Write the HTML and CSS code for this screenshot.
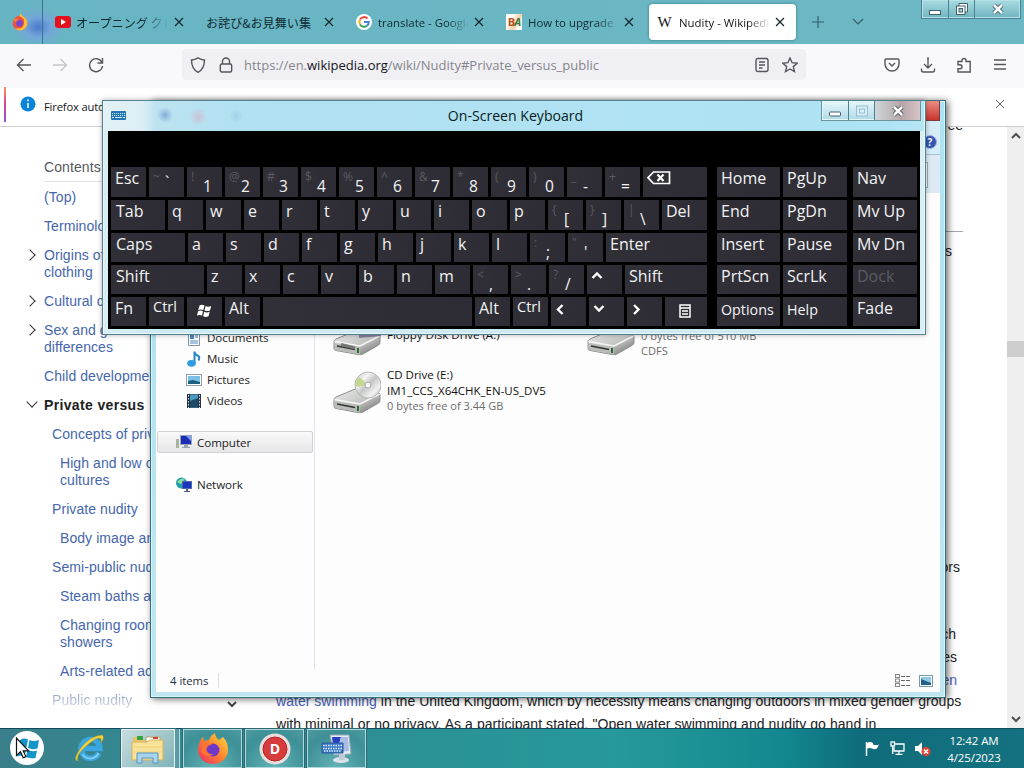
FILE: index.html
```html
<!DOCTYPE html>
<html lang="en">
<head>
<meta charset="utf-8">
<title>Desktop</title>
<link rel="stylesheet" href="styles.css">
</head>
<body>
<div class="desktop">
  <main class="browser">
    <header class="tabstrip">
      <div class="pinned"><svg width="18" height="18" viewBox="0 0 32 32"><circle cx="16" cy="18" r="13" fill="#f0503c"/><path d="M17 0q1 5 6 7 7 5 6 13a13 13 0 0 1-22 7q14 3 16-8T15 6z" fill="#ffbf35"/><circle cx="15" cy="18" r="6" fill="#7848c8"/><path d="M4 12q6-5 10 1-5 0-5 4z" fill="#ff8038"/></svg></div>
      <div class="tabs">
        <div class="tab"><svg class="fav wide" width="16" height="12" viewBox="0 0 16 12"><rect width="16" height="12" rx="3" fill="#e4101c"/><path d="M6 3v6l5-3z" fill="#fff"/></svg><span class="label jp yt">オープニング クレ</span><svg class="x" viewBox="0 0 10 10"><path d="M1 1l8 8M9 1l-8 8"/></svg></div>
        <div class="tab plain"><span class="label jp">お詫び&amp;お見舞い集</span><svg class="x" viewBox="0 0 10 10"><path d="M1 1l8 8M9 1l-8 8"/></svg></div>
        <div class="tab"><svg class="fav" width="16" height="16" viewBox="0 0 16 16"><circle cx="8" cy="8" r="8" fill="#fff"/><g fill="none" stroke-width="2"><path d="M4 5.5a4.8 4.8 0 0 1 7.5-1" stroke="#e04a3c"/><path d="M4 5.5a5 5 0 0 0 0 5" stroke="#f3b820"/><path d="M4 10.5a4.8 4.8 0 0 0 7 1.2" stroke="#35a457"/><path d="M8 8h4.8q0 2.5-1.8 3.7" stroke="#4381e8"/></g></svg><span class="label">translate - Google</span><svg class="x" viewBox="0 0 10 10"><path d="M1 1l8 8M9 1l-8 8"/></svg></div>
        <div class="tab"><span class="fav ba"><b>B</b><i>A</i></span><span class="label">How to upgrade</span><svg class="x" viewBox="0 0 10 10"><path d="M1 1l8 8M9 1l-8 8"/></svg></div>
        <div class="tab active"><span class="fav w">W</span><span class="label">Nudity - Wikipedi</span><svg class="x" viewBox="0 0 10 10"><path d="M1 1l8 8M9 1l-8 8"/></svg></div>
      </div>
      <svg class="newtab" width="14" height="14" viewBox="0 0 14 14"><path d="M7 1v12M1 7h12"/></svg>
      <svg class="alltabs" width="14" height="14" viewBox="0 0 14 14"><path d="M2 4l5 5 5-5"/></svg>
      <div class="controls">
        <span class="ctl min"><svg width="14" height="14" viewBox="0 0 14 14"><rect x="1.5" y="8.5" width="11" height="4" fill="#fff" stroke="#41606c"/></svg></span>
        <span class="ctl max"><svg width="14" height="14" viewBox="0 0 14 14"><path d="M4 1.5h8.5V10H4z" fill="#fff" stroke="#41606c"/><rect x="1.5" y="4" width="8.5" height="8.5" fill="#fff" stroke="#41606c"/><rect x="4" y="6.5" width="3.5" height="3.5" fill="#9cc" stroke="#41606c"/></svg></span>
        <span class="ctl cls"><svg width="14" height="14" viewBox="0 0 14 14"><path d="M3 3l8 8M11 3l-8 8" stroke="#41606c" stroke-width="4.5"/><path d="M3 3l8 8M11 3l-8 8" stroke="#fff" stroke-width="2.5"/></svg></span>
      </div>
    </header>
    <nav class="toolbar">
      <svg width="16" height="16" viewBox="0 0 16 16"><path d="M15 8H1.5M7.5 2l-6 6 6 6"/></svg>
      <svg class="dim" width="16" height="16" viewBox="0 0 16 16"><path d="M1 8h13.5M8.5 2l6 6-6 6"/></svg>
      <svg width="16" height="16" viewBox="0 0 16 16"><path d="M14 5.5A6.5 6.5 0 1 0 14.5 9M14.5 1v5h-5"/></svg>
      <div class="urlbar">
        <svg width="16" height="16" viewBox="0 0 16 16"><path d="M8 .8q3 1.900 6.500 2.200 0 9-6.500 12.300Q1.500 12 1.500 3 5 2.700 8 .8z"/></svg>
        <svg class="lock" width="14" height="16" viewBox="0 0 14 16"><rect x="1.300" y="7" width="11.400" height="8" rx="1.500"/><path d="M3.500 7V4.500a3.500 3.500 0 0 1 7 0V7"/></svg>
        <span class="url">https://en.<b>wikipedia.org</b>/wiki/Nudity#Private_versus_public</span>
        <svg width="14" height="16" viewBox="0 0 14 16"><rect x="1" y="1.500" width="12" height="13" rx="2"/><path d="M4 5h6M4 8h6M4 11h3.500"/></svg>
        <svg class="star" width="16" height="16" viewBox="0 0 16 16"><path d="M8 1l2.100 4.700 5.100.5-3.900 3.400 1.200 5L8 12l-4.500 2.600 1.200-5L.8 6.200l5.100-.5z"/></svg>
      </div>
      <svg class="pocket" width="16" height="16" viewBox="0 0 16 16"><path d="M2 2h12q1 0 1 1v4a7 7 0 0 1-14 0V3q0-1 1-1zM5 6l3 3 3-3"/></svg>
      <svg width="16" height="16" viewBox="0 0 16 16"><path d="M8 0v10.500M4 7l4 4 4-4M1.500 11.500v1.500q0 2 2 2h9q2 0 2-2v-1.500"/></svg>
      <svg width="16" height="16" viewBox="0 0 16 16"><path d="M2 6V4.500h4v-1a2 2 0 0 1 4 0v1h4.200V15H2v-3.300h2a2 2 0 0 0 0-4H2z"/></svg>
      <svg width="16" height="16" viewBox="0 0 16 16"><path d="M2 3h12M2 7.500h12M2 12h12"/></svg>
    </nav>
    <div class="notice">
      <i class="stripe"></i>
      <svg width="16" height="16" viewBox="0 0 16 16"><circle cx="8" cy="8" r="7.500" fill="#0a84d8"/><path d="M8 3.500v1.800M8 7v5" stroke="#fff" stroke-width="1.500"/></svg>
      <span>Firefox auto</span>
      <svg class="x" viewBox="0 0 10 10"><path d="M1 1l8 8M9 1l-8 8"/></svg>
    </div>
    <div class="page">
      <aside class="toc">
        <h2>Contents</h2>
        <ul>
          <li>(Top)</li><li>Terminolo</li>
          <li class="more">Origins of<br>clothing</li><li class="more">Cultural c</li>
          <li class="more">Sex and g<br>differences</li><li>Child developme</li>
          <li class="more open">Private versus</li>
          <li class="l2">Concepts of priv</li><li class="l3">High and low c<br>cultures</li>
          <li class="l2">Private nudity</li><li class="l3">Body image an</li>
          <li class="l2">Semi-public nud</li><li class="l3">Steam baths a</li>
          <li class="l3">Changing room<br>showers</li><li class="l3">Arts-related ac</li>
          <li class="l2 fade">Public nudity</li>
        </ul>
      </aside>
      <svg class="tocdown" width="10" height="8" viewBox="0 0 10 8"><path d="M1 2l4 4 4-4"/></svg>
      <article>
        <p class="r p1">ee</p><hr>
        <p class="r p2">s</p>
        <p class="r p3">ors</p>
        <p class="r p4">ch</p>
        <p class="r p5">es</p>
        <p class="r p5"><a>en</a></p>
        <p class="line first"><a>water swimming</a> in the United Kingdom, which by necessity means changing outdoors in mixed gender groups</p>
        <p class="line second">with minimal or no privacy. As a participant stated, "Open water swimming and nudity go hand in</p>
      </article>
      <div class="scroll">
        <svg width="10" height="8" viewBox="0 0 10 8"><path d="M1 6l4-4 4 4"/></svg>
        <i></i>
        <svg class="dn" width="10" height="8" viewBox="0 0 10 8"><path d="M1 2l4 4 4-4"/></svg>
      </div>
    </div>
  </main>

  <section class="explorer">
    <div class="exbody">
      <div class="ribbon"><i class="redclose"></i><span class="help">?</span><i class="search"></i></div>
      <div class="columns">
        <div class="side">
          <div class="it sub"><svg width="16" height="16" viewBox="0 0 16 16"><path d="M2.500.5h11v15h-11z" fill="#fff" stroke="#8096a8"/><rect x="4" y="4" width="4" height="5" fill="#4d86c0"/><path d="M9 5h3M9 7h3M4 11h8M4 13h8" stroke="#4d86c0"/></svg>Documents</div>
          <div class="it sub"><svg width="16" height="16" viewBox="0 0 16 16"><path d="M8.500 13V.5q0 3 3 4t1 5" fill="none" stroke="#2788c8" stroke-width="2"/><ellipse cx="5.500" cy="12.300" rx="4.300" ry="3.400" fill="#2f9be0"/></svg>Music</div>
          <div class="it sub"><svg width="16" height="16" viewBox="0 0 16 16"><rect x=".5" y="2.500" width="15" height="11" fill="#fff" stroke="#8fa3b5"/><rect x="2" y="4" width="12" height="8" fill="#7cc0e8"/><path d="M2 9l5-1 7 2v2H2z" fill="#1c6080"/></svg>Pictures</div>
          <div class="it sub"><svg width="16" height="16" viewBox="0 0 16 16"><rect x="1" y="1" width="14" height="14" fill="#26343f"/><rect x="4" y="1.500" width="8" height="13" fill="#4c9ac8"/><path d="M4 8l8-3v9H4z" fill="#1f4a68"/><path d="M2.500 2v13M13.500 2v13" stroke="#dfe8ee" stroke-dasharray="1.500 1.500"/></svg>Videos</div>
          <div class="it sel"><svg width="16" height="16" viewBox="0 0 16 16"><rect x="0" y="5" width="3" height="9" fill="#a8b4a0"/><rect x="4.500" y="1.500" width="11" height="9" fill="#1b2fb4" stroke="#98a4bc"/><path d="M10 2h5v5z" fill="#7d9cf0"/><path d="M8 11h4v2h2v1H6v-1h2z" fill="#9aa5b0"/></svg>Computer</div>
          <div class="it net"><svg width="16" height="16" viewBox="0 0 16 16"><circle cx="5.500" cy="6" r="5.500" fill="#22a0b0"/><path d="M1 5q4-5 8-3l-4 5z" fill="#8fdf9c"/><rect x="6.500" y="4.500" width="9" height="7" fill="#1737c0" stroke="#5268a8"/><path d="M10 12h2v2h2v1H8v-1h2z" fill="#506080"/></svg>Network</div>
        </div>
        <div class="files">
          <div class="drive">
            <svg width="48" height="46" viewBox="0 0 48 46"><use href="#box"/><path d="M26 15h22v8l-22 2z" fill="#8580a0"/><path d="M8 31.500l14 3.500" stroke="#777" stroke-width="3"/></svg>
            <div class="txt"><span>Floppy Disk Drive (A:)</span></div>
          </div>
          <div class="drive">
            <svg width="48" height="46" viewBox="0 0 48 46"><use href="#box"/><ellipse cx="35" cy="15" rx="13" ry="9" fill="#cfd2d0"/></svg>
            <div class="txt up"><span>CD Drive</span><em>0 bytes free of 510 MB</em><em>CDFS</em></div>
          </div>
          <div class="drive two">
            <svg width="48" height="46" viewBox="0 0 48 46">
              <defs>
                <linearGradient id="metal" x1="0" y1="0" x2="1" y2="1"><stop offset="0" stop-color="#ececec"/><stop offset=".55" stop-color="#c4c6c4"/><stop offset="1" stop-color="#666"/></linearGradient>
                <linearGradient id="disc" x1="0" y1="0" x2="1" y2="1"><stop offset="0" stop-color="#c0c4c0"/><stop offset=".3" stop-color="#f4f4f4"/><stop offset=".5" stop-color="#c4c6c4"/><stop offset=".75" stop-color="#f2f2f2"/><stop offset="1" stop-color="#aeb0ae"/></linearGradient>
                <g id="box"><path d="M1 28.500Q1 27 3 26L21 18.500q2-.7 4-.4l20 3.500q2 .4 2 2v6q0 1.500-1.500 2.500L30 41q-2 1-4.500.6L3 37.500q-2-.5-2-2z" fill="url(#metal)" stroke="#8c8e8c"/><path d="M1.500 28.500l25.500 4.500 19.500-10" fill="none" stroke="#f6f6f6" stroke-width="1.500"/><path d="M2 30l25 4.500v7L3 37.300q-1-.3-1-2z" fill="#babcba"/><path d="M4 33l18 3.500" stroke="#333" stroke-width="1.300"/><path d="M25 35v5" stroke="#2a6a30" stroke-width="2"/></g>
              </defs>
              <use href="#box"/><circle cx="35" cy="14" r="13" fill="url(#disc)" stroke="#b4b6b4"/><path d="M35 14L22.500 16q-1-6 4-10z" fill="#c4d690"/><circle cx="35" cy="14" r="3" fill="#fff" stroke="#aaa"/></svg>
            <div class="txt"><span>CD Drive (E:)</span><span class="vol">IM1_CCS_X64CHK_EN-US_DV5</span><em>0 bytes free of 3.44 GB</em></div>
          </div>
        </div>
      </div>
      <footer class="status"><span>4 items</span><i></i>
        <svg class="v1" width="16" height="14" viewBox="0 0 16 14"><g fill="none" stroke="#888"><rect x=".5" y=".5" width="4" height="3"/><rect x=".5" y="5" width="4" height="3"/><rect x=".5" y="9.500" width="4" height="3"/><path d="M6 2.500h10M6 6.500h10M6 11.500h10" stroke="#666" stroke-dasharray="4 1"/></g></svg>
        <svg width="14" height="12" viewBox="0 0 14 12"><rect x=".5" y=".5" width="13" height="11" fill="#fff" stroke="#7d97ae"/><rect x="2" y="2" width="10" height="8" fill="#8fcbe6"/><path d="M2 4l10 4v2H2z" fill="#205f88"/></svg>
      </footer>
    </div>
  </section>

  <section class="osk">
    <div class="osktitle">
      <svg class="kbicon" width="15" height="9" viewBox="0 0 15 9"><rect width="15" height="9" rx="1" fill="#2477b4"/><path d="M1 2.500h13M1 4.500h13" stroke="#c9e8fa" stroke-dasharray="1 1"/><path d="M1 6.500h2M4 6.500h7M12 6.500h2" stroke="#c9e8fa"/></svg>
      <span>On-Screen Keyboard</span>
      <div class="controls osc">
        <span class="ctl min"><svg width="14" height="14" viewBox="0 0 14 14"><rect x="1.500" y="8" width="11" height="4" rx="1" fill="#fff" stroke="#41606c"/></svg></span>
        <span class="ctl max"><svg width="14" height="14" viewBox="0 0 14 14" fill="#d8eef6" stroke="#94bfce"><rect x="1.500" y="2" width="11" height="10"/><rect x="4.500" y="5" width="5" height="4"/></svg></span>
        <span class="ctl cls"><svg width="14" height="14" viewBox="0 0 14 14"><path d="M3 3l8 8M11 3l-8 8" stroke="#4c525a" stroke-width="4.500"/><path d="M3 3l8 8M11 3l-8 8" stroke="#fff" stroke-width="2.500"/></svg></span>
      </div>
    </div>
    <div class="keys">
      <div class="row">
        <kbd>Esc</kbd><kbd class="d"><s>~</s><b class="mid">&#96;</b></kbd><kbd class="d"><s>!</s><b>1</b></kbd><kbd class="d"><s>@</s><b>2</b></kbd><kbd class="d"><s>#</s><b>3</b></kbd><kbd class="d"><s>$</s><b>4</b></kbd><kbd class="d"><s>%</s><b>5</b></kbd><kbd class="d"><s>^</s><b>6</b></kbd><kbd class="d"><s>&amp;</s><b>7</b></kbd><kbd class="d"><s>*</s><b>8</b></kbd><kbd class="d"><s>(</s><b>9</b></kbd><kbd class="d"><s>)</s><b>0</b></kbd><kbd class="d"><s>_</s><b>-</b></kbd><kbd class="d"><s>+</s><b>=</b></kbd><kbd class="fill"><svg class="bksp" width="24" height="14" viewBox="0 0 24 14"><path d="M6.500 1H22.500V12.500H6.500L1 6.700z"/><path d="M10.500 3.500l6 6.500M16.500 3.500l-6 6.500" stroke-width="2.200"/></svg></kbd>
        <kbd class="n1">Home</kbd><kbd class="n2">PgUp</kbd><kbd class="n3">Nav</kbd>
      </div>
      <div class="row">
        <kbd class="tabk">Tab</kbd><kbd>q</kbd><kbd>w</kbd><kbd>e</kbd><kbd>r</kbd><kbd>t</kbd><kbd>y</kbd><kbd>u</kbd><kbd>i</kbd><kbd>o</kbd><kbd>p</kbd><kbd class="d"><s>{</s><b>[</b></kbd><kbd class="d"><s>}</s><b>]</b></kbd><kbd class="d"><s>|</s><b>\</b></kbd><kbd class="fill">Del</kbd>
        <kbd class="n1">End</kbd><kbd class="n2">PgDn</kbd><kbd class="n3">Mv Up</kbd>
      </div>
      <div class="row s">
        <kbd class="capsk">Caps</kbd><kbd>a</kbd><kbd>s</kbd><kbd>d</kbd><kbd>f</kbd><kbd>g</kbd><kbd>h</kbd><kbd>j</kbd><kbd>k</kbd><kbd>l</kbd><kbd class="d"><s>:</s><b>;</b></kbd><kbd class="d"><s>"</s><b>'</b></kbd><kbd class="fill">Enter</kbd>
        <kbd class="n1">Insert</kbd><kbd class="n2">Pause</kbd><kbd class="n3">Mv Dn</kbd>
      </div>
      <div class="row s">
        <kbd class="shiftk">Shift</kbd><kbd>z</kbd><kbd>x</kbd><kbd>c</kbd><kbd>v</kbd><kbd>b</kbd><kbd>n</kbd><kbd>m</kbd><kbd class="d"><s>&lt;</s><b>,</b></kbd><kbd class="d"><s>&gt;</s><b>.</b></kbd><kbd class="d"><s>?</s><b>/</b></kbd><kbd><svg class="arr" width="12" height="16" viewBox="0 0 12 16"><path d="M1.500 11L6 6.500l4.500 4.500"/></svg></kbd><kbd class="fill">Shift</kbd>
        <kbd class="n1">PrtScn</kbd><kbd class="n2">ScrLk</kbd><kbd class="n3 off">Dock</kbd>
      </div>
      <div class="row s">
        <kbd>Fn</kbd><kbd class="ctrl">Ctrl</kbd><kbd class="win"><svg width="15" height="14" viewBox="0 0 15 14" fill="#fff"><path d="M2.500 1.500q2.500-1.500 5 0L6.400 6Q4 5 1.200 6zM8.600 2q2.500 1.300 5.600 0L13 6.500q-2.500 1-5.500 0zM1 7.200q2.500-1.200 5 0L5 11.600q-2.300-1.200-5 0zM7.200 7.800q2.500 1.200 5.500 0l-1.200 4.500q-2.800 1.200-5.400 0z"/></svg></kbd><kbd>Alt</kbd><kbd class="space"></kbd><kbd>Alt</kbd><kbd class="ctrl">Ctrl</kbd><kbd><svg class="arr low" width="12" height="16" viewBox="0 0 12 16"><path d="M7.500 4L3 8.500 7.500 13"/></svg></kbd><kbd><svg class="arr" width="12" height="16" viewBox="0 0 12 16"><path d="M1.500 7L6 11.500 10.500 7"/></svg></kbd><kbd><svg class="arr low" width="12" height="16" viewBox="0 0 12 16"><path d="M3 4l4.500 4.500L3 13"/></svg></kbd><kbd class="fill menu"><svg width="12" height="14" viewBox="0 0 12 14" fill="none" stroke="#fff"><rect x="1" y="1" width="10" height="12" stroke-width="1.500"/><path d="M1 4h10M3 7h6M3 10h6" stroke-width="1.500"/></svg></kbd>
        <kbd class="n1 small">Options</kbd><kbd class="n2 small">Help</kbd><kbd class="n3">Fade</kbd>
      </div>
    </div>
  </section>

  <footer class="taskbar">
    <div class="start"><svg width="34" height="34" viewBox="0 0 34 34"><circle cx="17" cy="17" r="17" fill="#fff"/><path d="M10 9q4-2.500 8-.5l-1.500 8q-4-1-8 .5zM19.500 9q4 2 9.500 0l-1.500 8.500q-5 1.500-9.500-.5zM8.500 18.500q4-1.500 7.500 0l-1.500 7q-4-1.500-7.500 0zM17.500 19q4.500 2 9.500.5L25.500 27q-5 1-9.500-1z" fill="#1495c8"/><path d="M6.500 7v17.500l4-3.700 2.700 6 2.700-1.200-2.700-5.700h5.300z" fill="#fff" stroke="#111" stroke-width="1.200"/></svg></div>
    <div class="ie"><svg width="32" height="32" viewBox="0 0 32 32"><path d="M26 21a9.500 9.500 0 1 1 1-4.500H10" fill="none" stroke="#3aa6e2" stroke-width="5.500"/><path d="M25.500 21a9 9 0 0 1-16 1" fill="none" stroke="#7bcdf5" stroke-width="2"/><path d="M5 29Q-1 28 8 16T29 3q3 2-1 8 1-5-2-5-4 0-14 9T5 29z" fill="#f2d23c" stroke="#caa520" stroke-width=".5"/></svg></div>
    <div class="task folder"><svg width="34" height="32" viewBox="0 0 34 32"><path d="M2 4h9l2 3h17v20H2z" fill="#e8c46a"/><path d="M6 3h6v4H6z" fill="#37a348"/><path d="M15 4h14v5H15z" fill="#fff" stroke="#b7a468"/><path d="M22 5h5" stroke="#c44" stroke-width="2"/><path d="M1 9h15l3-2h13v20H1z" fill="#f8e39a" stroke="#d2b35c"/><path d="M2 14h30M2 19h30" stroke="#efd078"/><path d="M6 30V20h21v10h-5v-5H11v5z" fill="#a8d4ee" stroke="#5294c0"/></svg></div>
    <i class="stack"></i>
    <div class="task fx"><svg width="32" height="32" viewBox="0 0 32 32"><defs><linearGradient id="fire" x1="1" y1="0" x2="0" y2="1"><stop offset="0" stop-color="#ffe24a"/><stop offset=".45" stop-color="#ff8b2a"/><stop offset="1" stop-color="#e8286c"/></linearGradient></defs><path d="M2 11Q4 5 6 4l1 4 5-1q2-5 6-7 0 4 4 7l4-3q5 5 5 13a15 14 0 0 1-30 0q0-3 1-6z" fill="url(#fire)"/><circle cx="16" cy="17" r="6.500" fill="#7038c8"/><path d="M6 11q5-3 9 1-6 0-6 4 1 6 8 5-9 5-13-3z" fill="#fb742e"/></svg></div>
    <div class="task"><svg width="32" height="32" viewBox="0 0 32 32"><circle cx="16" cy="16" r="15.500" fill="#e9dede"/><circle cx="16" cy="16" r="12" fill="#d63c3c" stroke="#b82424"/><text x="16" y="21" text-anchor="middle" class="dlogo">D</text></svg></div>
    <div class="task"><svg width="32" height="32" viewBox="0 0 32 32"><path d="M9 2l19 0 2 19-17 1z" fill="#e4ebf2" stroke="#9aa9b8"/><path d="M11 4l9 0-4 14-3 1z" fill="#263fc0"/><path d="M20 4h7l1 14-12 1z" fill="#a9bce4"/><ellipse cx="20" cy="27" rx="8" ry="3" fill="#dde3ea"/><path d="M18 21h6v6h-6z" fill="#c3ccd5"/><path d="M1 10h21v10H1z" fill="#3777c8" stroke="#2b5b9c"/><path d="M2 12.500h19M2 15.500h19M3 18h17" stroke="#e2f0ff" stroke-width="1.500" stroke-dasharray="1.500 1"/></svg></div>
    <div class="tray">
      <svg width="15" height="15" viewBox="0 0 15 15"><path d="M1.500 1v14" stroke="#fff" stroke-width="1.500"/><path d="M2 2q3-2 6 0v1.500q3 1 6 0l-2 4q-3 1.500-5 0-2-1-5 0z" fill="#fff"/></svg>
      <svg width="15" height="15" viewBox="0 0 15 15" fill="none" stroke="#fff" stroke-width="1.300"><path d="M5 3h9v7H4V6M9 10v3M5.500 13.300h7"/><rect x="1" y="1" width="3.500" height="4"/><path d="M2.700 5v8"/></svg>
      <svg width="16" height="15" viewBox="0 0 16 15"><path d="M0 5h3l4-4v13l-4-4H0z" fill="#fff"/><circle cx="11" cy="10.500" r="4.500" fill="#e04434"/><path d="M9 8.500l4 4M13 8.500l-4 4" stroke="#fff" stroke-width="1.500"/></svg>
    </div>
    <div class="clock"><span>12:42 AM</span><span>4/25/2023</span></div>
  </footer>
</div>
</body>
</html>
```

FILE: styles.css
```css
* { box-sizing: border-box; }
body { margin: 0; font-family: "Open Sans", "Noto Sans", sans-serif; }
svg { display: block; flex: none; }
.desktop { width: 1024px; height: 768px; overflow: hidden; position: relative; display: flex; flex-direction: column; background: #fff; }
.browser { height: 728px; display: flex; flex-direction: column; }

/* tab strip */
.tabstrip { height: 44px; flex: none; display: flex; align-items: center; background: radial-gradient(ellipse 26px 20px at 38px 27px, #4b79cc, #74a6d8 50%, transparent), linear-gradient(90deg, #67b4c3, #6db8c4); }
.pinned { width: 43px; height: 44px; padding: 13px 0 0 11px; border-right: 1px solid #347887; }
.tabs { display: flex; gap: 3px; margin-left: 6px; width: 747px; }
.tab { width: 147px; height: 36px; display: flex; align-items: center; padding: 0 12px 0 7px; color: #0e2a33; font-size: 11.4px; }
.tab.active { background: #fff; border-radius: 4px; color: #15141a; box-shadow: 0 0 3px #357885; padding-right: 11px; }
.fav { margin-right: 6px; width: 16px; flex: none; }
.tab .wide { margin-left: -1px; margin-right: 5px; }
.label { flex: 1; white-space: nowrap; overflow: hidden; margin-right: 4px; mask-image: linear-gradient(90deg, #000 75%, transparent 99%); }
.jp { font-family: "Noto Sans CJK JP", sans-serif; font-size: 12.1px; mask-image: none; margin-right: 0; }
.yt { mask-image: linear-gradient(90deg, #000 70%, transparent 99%); margin-right: 5px; }
.x { width: 10px; height: 10px; fill: none; stroke: #15252c; stroke-width: 1.2; }
.w { font: 15px "Liberation Serif", serif; letter-spacing: -1px; text-align: center; margin-right: 7px; }
.ba { height: 16px; background: linear-gradient(120deg, #fff 30%, #f6cfa0 60%, #fff 80%); font-size: 11px; line-height: 16px; letter-spacing: -1px; text-align: center; }
.ba b { color: #c04a20; }
.ba i { color: #3c7a3c; font-weight: 700; }
.newtab, .alltabs { fill: none; stroke: #355f6b; stroke-width: 1.2; margin-left: 15px; }
.alltabs { margin-left: 26px; }
.controls { display: flex; height: 19px; border: 1px solid #4b8292; border-top: 0; background: linear-gradient(#a9dbe1, #6fb5c1); box-shadow: inset 0 0 0 1px #b4e2e7; }
.tabstrip .controls { margin-left: auto; margin-right: 3px; align-self: flex-start; }
.ctl { width: 27px; display: flex; justify-content: center; align-items: center; border-right: 1px solid #4b8292; }
.ctl.max { width: 26px; }
.ctl.cls { width: 45px; border: 0; }

/* toolbar */
.toolbar { height: 44px; flex: none; background: #f9f9fb; display: flex; align-items: center; padding: 0 16px 3px; gap: 20px; }
.toolbar svg { fill: none; stroke: #55555c; stroke-width: 1.4; }
.toolbar .dim { stroke: #c5c5ca; }
.urlbar { width: 624px; height: 31px; border-radius: 4px; background: #f0f0f4; display: flex; align-items: center; padding: 0 8px; margin-left: 58px; }
.urlbar .lock { margin-left: 13px; }
.url { flex: 1; font-size: 13px; color: #85858c; margin-left: 11px; white-space: nowrap; }
.url b { font-weight: 400; color: #15141a; }
.star { margin-left: 13px; }
.pocket { margin-left: 58px; }
.notice { height: 39px; flex: none; display: flex; align-items: center; background: #fff; border-bottom: 1px solid #cfcfd3; font-size: 11.2px; padding: 0 19px 6px 4px; color: #15141a; }
.notice svg { margin-left: 14px; }
.notice span { margin-left: 8px; padding-top: 4px; flex: 1; letter-spacing: -.15px; }
.notice .x { stroke: #5b5b66; stroke-width: 1; }
.stripe { width: 2px; height: 35px; background: linear-gradient(#ff9460, #d83f92, #9059e0); }

/* article */
.page { flex: 1; min-height: 0; display: flex; overflow: hidden; font: 14px/17px "Liberation Sans", Arial, sans-serif; color: #202122; }
.toc { width: 227px; padding: 32px 0 0 44px; white-space: nowrap; flex: none; }
.toc h2 { font-size: 14px; font-weight: 400; margin: 0; padding-bottom: 5px; color: #54595d; border-bottom: 1px solid #e0e2e6; letter-spacing: .1px; }
.toc ul { list-style: none; margin: 7px 0 0; padding: 0; display: flex; flex-direction: column; gap: 12px; color: #4566ac; letter-spacing: .07px; }
.more::before { content: ""; float: left; width: 7px; height: 7px; margin: 4px 0 0 -18px; border: solid #333; border-width: 1.5px 1.5px 0 0; transform: rotate(45deg); }
.open { color: #202122; font-weight: 700; letter-spacing: .35px; }
.open::before { transform: rotate(135deg); margin-top: 1px; margin-left: -16px; }
.l2 { padding-left: 8px; }
.l3 { padding-left: 16px; }
.fade { color: transparent; background: linear-gradient(#8c9cc4, #dde2ee); background-clip: text; }
.tocdown { fill: none; stroke: #444; stroke-width: 2; align-self: flex-end; margin: 0 0 20px; }
article { margin-left: 39px; width: 688px; flex: none; }
article p { margin: 0; white-space: nowrap; }
article a { color: #4560b8; }
article .line { letter-spacing: .035px; }
.r { text-align: right; padding-right: 4px; }
article .p1 { margin-top: -10px; padding-right: 1px; }
article hr { border: 0; border-top: 1px solid #a2a9b1; margin: 97px 1px 0 0; }
article .p2 { padding-right: 12px; margin-top: 11px; }
article .p3 { margin-top: 299px; }
article .p4 { margin-top: 50px; padding-right: 8px; }
article .p5 { margin-top: 6px; padding-right: 7px; }
article .first { margin-top: 4px; }
article .second { margin-top: 6px; letter-spacing: .06px; }
.scroll { width: 17px; background: #efefef; margin-left: auto; display: flex; flex-direction: column; align-items: center; padding: 5px 0; }
.scroll svg { fill: none; stroke: #505050; stroke-width: 2; flex: none; }
.scroll i { width: 17px; height: 16px; background: #cdcdcd; margin-top: 201px; }
.scroll .dn { margin-top: auto; }

/* file explorer */
.explorer { position: absolute; left: 150px; top: 100px; width: 796px; height: 598px; border: 1px solid #3d6e7e; background: linear-gradient(#aee2f2, #bfe6ee); box-shadow: 2px 1px 7px rgba(0,0,0,.6), inset 0 0 0 1px #d6f5fa; padding: 0 5px 5px; }
.exbody { height: 100%; display: flex; flex-direction: column; background: #fdfdfd; }
.ribbon { height: 92px; flex: none; display: flex; flex-direction: column; align-items: flex-end; background: linear-gradient(#b3e4f4 20px, #d5edf6 20px 53px, #a9c0d2 53px 54px, #dde9f4 54px); }
.redclose { width: 44px; height: 20px; background: linear-gradient(#ec8d84, #c9352c); border: 1px solid #7c3c40; border-top: 0; }
.help { width: 14px; height: 14px; margin: 14px 3px 0; border-radius: 50%; background: #3454b4; border: 1px solid #9eb4e8; color: #fff; font-size: 10px; line-height: 12px; text-align: center; font-weight: 700; }
.search { width: 160px; height: 26px; border: 1px solid #9ba9b4; background: #fff; margin: 13px 12px 0; }
.columns { flex: 1; display: flex; min-height: 0; }
.side { width: 159px; border-right: 1px solid #dce6f0; padding: 134px 0 0 1px; font-size: 11.6px; color: #1c1c1c; }
.it { height: 21px; display: flex; align-items: center; gap: 5px; padding-left: 19px; letter-spacing: -.06px; }
.it.sub { padding-left: 29px; }
.it.sel { margin: 20px 1px 21px 0; height: 22px; padding-left: 18px; border: 1px solid #d2d2d4; border-radius: 2px; background: linear-gradient(#fafafa, #e6e6e8); }
.files { padding: 115px 0 0 18px; display: grid; grid-template-columns: 254px 254px; grid-auto-rows: 58px; align-content: start; }
.drive { display: flex; gap: 6px; color: #111; font-size: 11.5px; }
.drive svg { margin-top: 5px; }
.txt { display: flex; flex-direction: column; line-height: 15.5px; white-space: nowrap; padding-top: 19px; }
.txt.up { padding-top: 4px; }
.two .txt { padding-top: 1px; }
.txt em { font-style: normal; color: #6d6d6d; font-size: 11.05px; }
.status { height: 23px; display: flex; align-items: center; padding: 0 7px 0 14px; font-size: 11.3px; color: #1e2e44; }
.status i { width: 1px; height: 15px; background: #dadfe4; margin-left: 10px; }
.status .v1 { margin-left: auto; margin-right: 8px; }

/* on-screen keyboard */
.osk { position: absolute; left: 102px; top: 100px; width: 824px; height: 235px; border: 1px solid #55808e; background: linear-gradient(90deg, #d9eef4, #cdebf4 5%, #cfeaf2 95%, #d8eff5); box-shadow: 0 0 5px rgba(0,0,0,.3), inset 0 0 0 1px #e4f7fb; padding: 0 5px 5px; display: flex; flex-direction: column; }
.osktitle { height: 30px; flex: none; margin: 0 -4px; padding-left: 4px; display: grid; grid-template-columns: 1fr auto 1fr; align-items: start; background: radial-gradient(circle 8px at 61px 14px, rgba(86,134,200,.55), transparent), radial-gradient(circle 9px at 94px 16px, rgba(224,160,190,.5), transparent), radial-gradient(circle 7px at 132px 15px, rgba(120,170,200,.3), transparent), linear-gradient(90deg, #e2f1f5 0, #dceef4 38px, #bde3f1 52px, #b2e1f1 120px, #aee3f4 95%, #b8e5f2); font-size: 14.1px; line-height: 30px; color: #0b1c22; }
.osktitle > span { margin-left: -1px; }
.kbicon { margin: 10px 0 0 3px; }
.osc { justify-self: end; height: 20px; margin-right: 3px; border-color: #6b929f; background: linear-gradient(#e6f7fb, #b0dae6); box-shadow: inset 0 0 0 1px #e5f6fa; }
.osc .cls { background: linear-gradient(90deg, #cfd5d9, #b5a6a8 60%, #d7c4c6); }
.keys { height: 198px; background: #000; padding: 36px 3px 3px; display: flex; flex-direction: column; gap: 3px; }
.row { display: flex; gap: 3px; height: 30px; }
.row.s { height: 29px; }
kbd { width: 35px; flex: none; background: linear-gradient(100deg, #313037, #2d2c35); color: #f2f2f4; font: 16px/20px "Open Sans", sans-serif; padding: 1px 0 0 4px; overflow: hidden; white-space: nowrap; display: flex; align-items: flex-start; }
.row .fill { flex: 1; }
.tabk { width: 54px; }
.capsk { width: 74px; }
.shiftk { width: 93px; }
kbd.tabk, kbd.capsk, kbd.shiftk { padding-left: 5px; }
.space { width: 209px; }
.row .n1 { width: 63px; margin-left: 7px; }
.row .n2 { width: 64px; }
.row .n3 { width: 64px; margin-left: 3px; }
.row .off { color: #5d5c62; }
.d s { text-decoration: none; color: #5b5a61; font-size: 12px; line-height: 18px; width: 12px; }
.d b { font-weight: 400; font-size: 15.5px; line-height: 20px; padding-top: 8px; }
.d .mid { padding-top: 4px; }
.row .ctrl { font-size: 14.5px; padding-top: 0; }
.row .small { font-size: 14.3px; padding-top: 3px; }
.row .win { padding: 7px 0 0 10px; }
.row .menu { padding: 7px 0 0 14px; }
.bksp { margin-top: 3px; fill: none; stroke: #fff; stroke-width: 1.7; }
.arr { fill: none; stroke: #fff; stroke-width: 2.4; margin-top: 1px; }
.arr.low { margin-top: 3px; }

/* taskbar */
.taskbar { height: 40px; flex: none; border-top: 1px solid #12495c; display: flex; padding-left: 10px; background: linear-gradient(90deg, #3a7f8a 0, #348790 12%, #2c8f94 36%, #26999a 60%, #13898f 76%, #0f6d7b 84%, #14717f 100%); }
.start { padding-top: 2px; width: 63px; }
.ie { width: 48px; padding-top: 3px; }
.task { width: 59px; height: 39px; margin-right: 3px; display: flex; justify-content: center; align-items: center; border: 1px solid #b2d8db; box-shadow: 0 0 0 1px #2d6872; background: radial-gradient(circle at 50% 100%, #63b4b6, #3d9096 70%, #4f9ba2); }
.folder { width: 54px; margin-right: 0; background: linear-gradient(135deg, #c8dde0, #80b3b7); border-color: #e4f2f3; }
.stack { width: 5px; height: 39px; border-right: 1px solid #b2d8db; margin-right: 3px; background: #5b9ca2; }
.dlogo { font: bold 14px "Open Sans", sans-serif; fill: #fff; }
.tray { margin-left: auto; display: flex; gap: 10px; padding-top: 12px; }
.clock { width: 93px; padding: 3px 7px 0 0; display: flex; flex-direction: column; align-items: center; font-size: 11.5px; line-height: 17px; color: #fff; letter-spacing: -.1px; }
```
